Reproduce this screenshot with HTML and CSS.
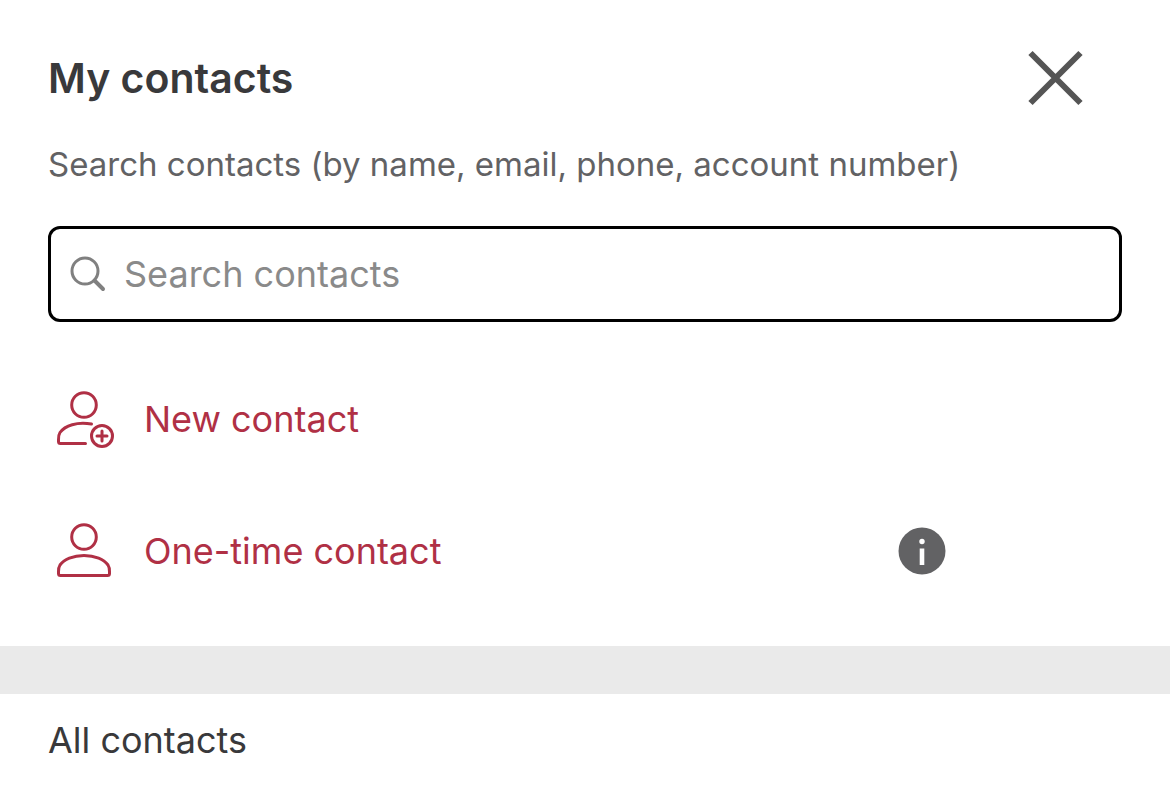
FILE: index.html
```html
<!DOCTYPE html>
<html lang="en">
<head>
<meta charset="utf-8">
<meta name="viewport" content="width=device-width, initial-scale=1">
<title>My contacts</title>
<link rel="stylesheet" href="styles.css">
</head>
<body>
<main class="panel">
  <header class="panel-header">
    <h1 class="title">My contacts</h1>
    <button class="icon-button" type="button" aria-label="Close">
      <svg class="close-icon" viewBox="0 0 56 56" aria-hidden="true"><path d="M2.500 3 52.500 53M52.500 3 2.500 53"/></svg>
    </button>
  </header>
  <label class="search-label" for="search">Search contacts (by name, email, phone, account number)</label>
  <div class="search-box">
    <svg class="search-icon" viewBox="0 0 36 36" aria-hidden="true"><circle cx="15" cy="15" r="13"/><path class="handle" d="m24.500 24.500 8.500 8.500"/></svg>
    <input class="search-input" id="search" type="text" placeholder="Search contacts">
  </div>
  <div class="actions">
    <div class="action-row">
      <button class="action" type="button">
        <svg class="person-icon" viewBox="0 0 60 60" aria-hidden="true"><circle cx="28" cy="16" r="12.300"/><path d="M35.500 35C21 32.500 9 36.500 4 43.500 2 46.500 2.500 49.500 2.500 52.500Q2.500 54.500 4.500 54.500H29.500"/><circle cx="46" cy="47" r="10.500"/><path d="M46 42v10M41 47h10"/></svg>
        <span>New contact</span>
      </button>
    </div>
    <div class="action-row">
      <button class="action" type="button">
        <svg class="person-icon" viewBox="0 0 60 60" aria-hidden="true"><circle cx="28" cy="16" r="12.300"/><path d="M28 34.500C17 34.500 8 38.500 4 44 2 47 2.500 49.500 2.500 52.500Q2.500 54.500 4.500 54.500H51.500Q53.500 54.500 53.500 52.500C53.500 49.500 54 47 52 44 48 38.500 39 34.500 28 34.500Z"/></svg>
        <span>One-time contact</span>
      </button>
      <button class="icon-button" type="button" aria-label="About one-time contacts">
        <svg class="info-icon" viewBox="0 0 48 48" aria-hidden="true"><circle cx="24" cy="24" r="23.500"/><circle class="mark" cx="24" cy="14.500" r="2.700"/><path class="mark" d="M21.700 21.500h4.600V38h-4.600z"/></svg>
      </button>
    </div>
  </div>
</main>
<section class="all-contacts">
  <h2 class="section-title">All contacts</h2>
</section>
</body>
</html>
```
FILE: styles.css
```css
* {
  box-sizing: border-box;
}

body {
  margin: 0;
  background: #fff;
  color: #39393b;
  font-family: Inter, "Liberation Sans", sans-serif;
}

button {
  border: 0;
  padding: 0;
  background: none;
  font: inherit;
  cursor: pointer;
}

svg {
  display: block;
  flex: none;
  fill: none;
}

.panel {
  padding: 48px 48px 29px;
}

.panel-header {
  display: flex;
  align-items: center;
  justify-content: space-between;
  height: 60px;
  padding-right: 38px;
}

.title {
  margin: 0;
  font-size: 41px;
  font-weight: 600;
  line-height: 60px;
}

.close-icon {
  width: 56px;
  height: 56px;
  stroke: #555;
  stroke-width: 6;
}

.search-label {
  display: block;
  margin: 32px 0 38px;
  color: #626264;
  font-size: 33px;
  line-height: 48px;
}

.search-box {
  display: flex;
  align-items: center;
  gap: 18px;
  height: 96px;
  padding: 0 19px;
  border: 3px solid #000;
  border-radius: 12px;
}

.search-icon {
  width: 36px;
  height: 36px;
  stroke: #808080;
  stroke-width: 3;
}

.handle {
  stroke-width: 4;
  stroke-linecap: round;
}

.search-input {
  flex: 1;
  min-width: 0;
  padding: 0;
  border: 0;
  outline: 0;
  background: none;
  color: #39393b;
  font: inherit;
  font-size: 36px;
  line-height: 48px;
}

.search-input::placeholder {
  color: #8a8a8a;
  opacity: 1;
}

.actions {
  padding-top: 31px;
}

.action-row {
  display: flex;
  align-items: center;
  justify-content: space-between;
  height: 132px;
  padding: 0 176px 0 8px;
}

.action {
  display: flex;
  align-items: center;
  gap: 28px;
  color: #b03045;
  font-size: 36px;
  line-height: 48px;
}

.person-icon {
  width: 60px;
  height: 60px;
  stroke: #b03045;
  stroke-width: 3;
  stroke-linecap: round;
  stroke-linejoin: round;
}

.info-icon {
  width: 48px;
  height: 48px;
  fill: #626264;
}

.mark {
  fill: #fff;
}

.all-contacts {
  padding: 22px 48px;
  border-top: 48px solid #eaeaea;
}

.section-title {
  margin: 0;
  font-size: 36px;
  font-weight: 400;
  line-height: 48px;
}
```
